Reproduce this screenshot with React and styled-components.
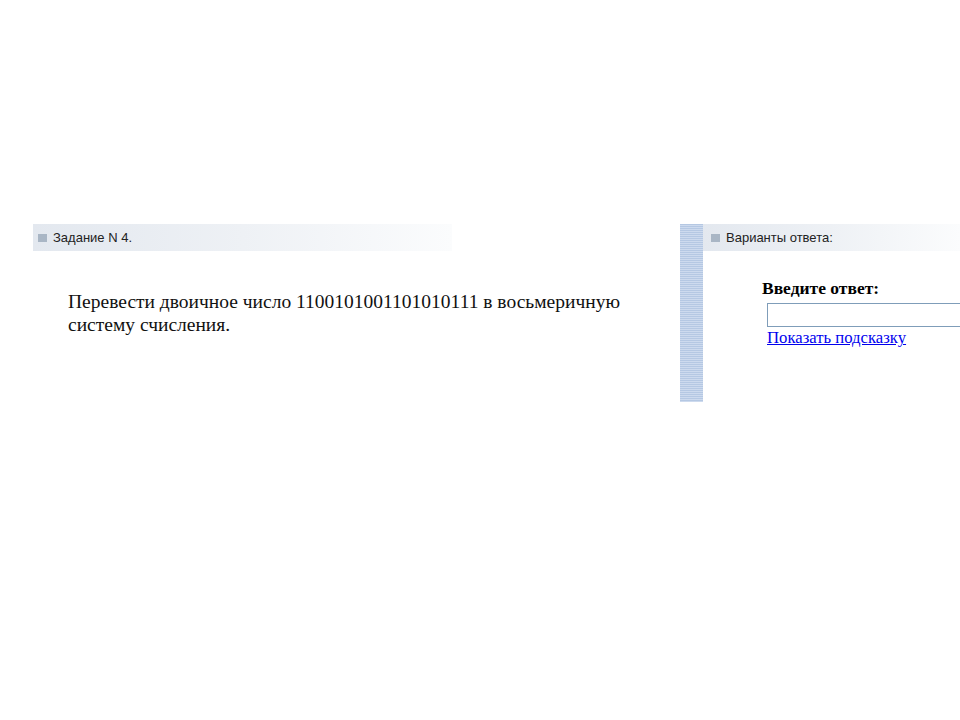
import styled, { createGlobalStyle } from "styled-components";

const Global = createGlobalStyle`
    body {
        margin: 0;
        background: #fff;
        font-family: "Liberation Serif", "Times New Roman", serif;
    }
`;

const Page = styled.div`
    display: flex;
    padding-top: 224px;
    width: 960px;
    overflow: hidden;
`;

const Task = styled.div`
    width: 680px;
    flex: none;
    padding-left: 33px;
    box-sizing: border-box;
`;

const Header = styled.div`
    display: flex;
    align-items: center;
    gap: 6px;
    height: 27px;
    width: ${(p) => p.width || "auto"};
    padding-left: ${(p) => p.pad || "5px"};
    box-sizing: border-box;
    background: linear-gradient(to right, #e3e8ef 0%, #eef1f5 50%, #fbfcfd 100%);
    font-family: "Liberation Sans", Arial, sans-serif;
    font-size: 13px;
    color: #222;
`;

const Square = styled.span`
    width: 9px;
    height: 8px;
    background: #a9b6c5;
    flex: none;
`;

const Question = styled.p`
    margin: 39px 0 0 35px;
    font-size: 19.5px;
    line-height: 23px;
    color: #111;
    width: 570px;
`;

const Stripe = styled.div`
    width: 23px;
    height: 178px;
    flex: none;
    background: repeating-linear-gradient(
        to bottom,
        #b5c8e3 0px,
        #b5c8e3 1px,
        #cddaee 1px,
        #cddaee 2px
    );
`;

const Answer = styled.div`
    flex: 1;
    min-width: 0;
`;

const Form = styled.div`
    padding: 28px 0 0 59px;
`;

const Label = styled.div`
    font-weight: bold;
    font-size: 17.5px;
    line-height: 19px;
    color: #000;
`;

const Input = styled.input`
    display: block;
    margin: 5px 0 0 5px;
    width: 300px;
    height: 24px;
    box-sizing: border-box;
    border: 1px solid #7f9db9;
    padding: 0;
`;

const Hint = styled.a`
    display: inline-block;
    margin-left: 5px;
    font-size: 16.7px;
    line-height: 21px;
    color: #0000ee;
    text-decoration: underline;
`;

export default function App() {
    return (
        <>
            <Global />
            <Page>
                <Task>
                    <Header width="419px">
                        <Square />
                        Задание N 4.
                    </Header>
                    <Question>
                        Перевести двоичное число 1100101001101010111 в
                        восьмеричную систему счисления.
                    </Question>
                </Task>
                <Stripe />
                <Answer>
                    <Header pad="8px">
                        <Square />
                        Варианты ответа:
                    </Header>
                    <Form>
                        <Label>Введите ответ:</Label>
                        <Input type="text" />
                        <Hint href="#">Показать подсказку</Hint>
                    </Form>
                </Answer>
            </Page>
        </>
    );
}
